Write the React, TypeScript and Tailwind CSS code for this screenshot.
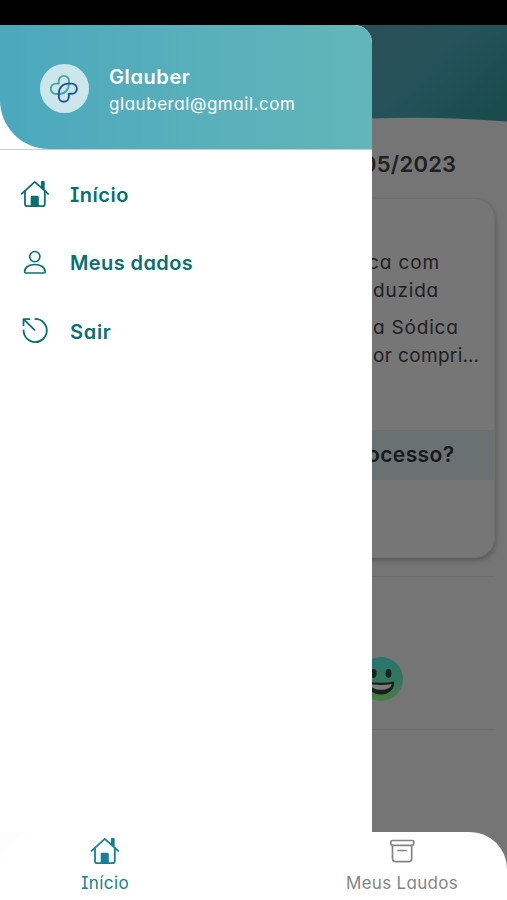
import { ReactNode } from "react";

interface IconProps {
  className?: string;
}

function HouseIcon({ className }: IconProps) {
  return (
    <svg viewBox="0 0 30 28" className={className} fill="none" stroke="currentColor" strokeWidth="1.8" strokeLinecap="round" strokeLinejoin="round">
      <path d="M1.6 13.8 L14.8 1.8 L28.2 13.8" />
      <path d="M5 11.5 V24 Q5 26.2 7.2 26.2 H22.6 Q24.8 26.2 24.8 24 V11.5" />
      <path d="M21.8 2 H23.8 V9 L21.8 7.2 Z" fill="currentColor" />
      <path d="M11.6 26 V17.2 Q11.6 16.7 12.1 16.7 H17.4 Q17.9 16.7 17.9 17.2 V26 Z" fill="currentColor" />
    </svg>
  );
}

function PersonIcon({ className }: IconProps) {
  return (
    <svg viewBox="0 0 24 26" className={className} fill="none" stroke="currentColor" strokeWidth="1.6" strokeLinejoin="round">
      <circle cx="11.8" cy="6.6" r="5.1" />
      <path d="M1.6 21.8 C1.6 17.4 6 14.5 11.8 14.5 C17.6 14.5 22.2 17.4 22.2 21.8 Q22.2 23 21.1 23 H2.7 Q1.6 23 1.6 21.8 Z" />
    </svg>
  );
}

function ExitIcon({ className }: IconProps) {
  return (
    <svg viewBox="0 0 28 28" className={className} fill="none" stroke="currentColor" strokeWidth="1.8" strokeLinecap="round" strokeLinejoin="round">
      <path d="M14.3 1.9 A11.6 11.6 0 1 1 2.6 13.5" />
      <path d="M13.5 12.8 L2.6 2.2 M2.5 8 V2.1 H8.5" />
    </svg>
  );
}

function ArchiveIcon({ className }: IconProps) {
  return (
    <svg viewBox="0 0 26 26" className={className} fill="none" stroke="currentColor" strokeWidth="1.7" strokeLinecap="round" strokeLinejoin="round">
      <rect x="1.8" y="2.5" width="23" height="4.8" rx="1.5" />
      <path d="M3.5 7.3 V20.5 Q3.5 23.6 6.5 23.6 H19.7 Q22.7 23.6 22.7 20.5 V7.3 M9 12.5 H17" />
    </svg>
  );
}

function Logo({ className }: IconProps) {
  return (
    <svg viewBox="0 0 29 29" className={className} fill="none" strokeWidth="1.9" strokeLinecap="round" strokeLinejoin="round">
      <path
        stroke="#43aa9b"
        d="M8.8 9.6 V7 A5.1 5.1 0 0 1 19 7 V9.6 C19 15.5 15.2 20 9.2 20 H6 A5.2 5.2 0 0 1 6 9.6 Z"
      />
      <path
        stroke="#24529a"
        d="M18.8 19.8 V22.8 A5 5 0 0 1 8.8 22.8 V19.6 C8.8 13.6 12.8 9.6 18.4 9.6 H21.8 A5.1 5.1 0 0 1 21.8 19.8 Z"
      />
    </svg>
  );
}

function Smiley({ className }: IconProps) {
  return (
    <svg viewBox="0 0 44 44" className={className}>
      <defs>
        <linearGradient id="face" x1="0" y1="0" x2="0" y2="1">
          <stop offset="0" stopColor="#27756f" />
          <stop offset="0.55" stopColor="#35765b" />
          <stop offset="1" stopColor="#477c43" />
        </linearGradient>
      </defs>
      <circle cx="22" cy="22" r="22" fill="url(#face)" />
      <ellipse cx="14.5" cy="16.5" rx="3" ry="4.4" fill="#17211e" />
      <ellipse cx="29.5" cy="16.5" rx="3" ry="4.4" fill="#17211e" />
      <path d="M8.8 24.5 Q22 27 35.2 24.5 C35.8 31 31 37.5 22 37.5 C13 37.5 8.2 31 8.8 24.5 Z" fill="#17211e" />
      <path d="M11.2 27 Q22 29.2 32.8 27 Q31.5 32.8 22 32.8 Q12.5 32.8 11.2 27 Z" fill="#7b7d7b" />
    </svg>
  );
}

function MenuItem({ icon, children }: { icon: ReactNode; children: ReactNode }) {
  return (
    <button className="flex h-[68.5px] w-full items-center pl-5 text-left text-[#08706f]">
      <span className="flex w-[30px] justify-center">{icon}</span>
      <span className="ml-5 pt-px text-[20px] font-semibold">{children}</span>
    </button>
  );
}

function Drawer() {
  return (
    <aside className="absolute top-[25px] left-0 h-[807px] w-[372px] overflow-hidden rounded-tr-[18px] bg-white">
      <div className="border-b border-[#c9cdce]">
        <header className="flex h-[124px] items-center rounded-bl-[49px] bg-linear-to-r from-[#4ba8bd] to-[#62b6b8] pt-[3px] pl-10 text-white">
          <div className="flex size-[49px] items-center justify-center rounded-full bg-[#cce7ec]">
            <Logo className="size-[29px]" />
          </div>
          <div className="ml-5 pt-[3px] whitespace-nowrap">
            <div className="text-[20px] leading-[27px] font-semibold tracking-[0.6px]">Glauber</div>
            <div className="text-[17px] leading-[26px] tracking-[0.55px]">glauberal@gmail.com</div>
          </div>
        </header>
      </div>
      <nav className="pt-[10px]">
        <MenuItem icon={<HouseIcon className="h-7 w-[30px]" />}>
          <span className="tracking-[0.5px]">Início</span>
        </MenuItem>
        <MenuItem icon={<PersonIcon className="h-[26px] w-6" />}>
          <span className="tracking-[0.4px]">Meus dados</span>
        </MenuItem>
        <MenuItem icon={<ExitIcon className="size-7" />}>
          <span className="tracking-[0.7px]">Sair</span>
        </MenuItem>
      </nav>
    </aside>
  );
}

export default function App() {
  return (
    <div className="relative flex h-[900px] w-full flex-col overflow-hidden bg-[#757575] font-['Inter','Noto_Sans',sans-serif] [font-feature-settings:'cv11','cv08']">
      <div className="h-[25px] shrink-0 bg-black" />

      {/* Dimmed page under the drawer */}
      <main className="h-[807px] shrink-0 whitespace-nowrap text-[#202122]">
        <svg viewBox="0 0 507 98" className="block h-[98px] w-full">
          <defs>
            <linearGradient id="banner" gradientUnits="userSpaceOnUse" x1="395" y1="0" x2="480" y2="95">
              <stop offset="0" stopColor="#295057" />
              <stop offset="0.45" stopColor="#25525a" />
              <stop offset="1" stopColor="#1a4c4e" />
            </linearGradient>
          </defs>
          <path d="M0 0 H507 V96.5 Q440 91 372 93.5 L0 98 Z" fill="url(#banner)" />
        </svg>
        <h1 className="mt-[26px] ml-[362px] text-[22px] leading-[30px] font-semibold tracking-[0.25px]">05/2023</h1>
        <section className="mt-[19px] mr-3 ml-3 h-[360px] overflow-hidden rounded-[20px] border border-[#6f6f6f] bg-[#767676] pt-[50px] shadow-[1px_3px_5px_#00000038]">
          <div className="ml-[355px] text-[19px] leading-7">
            <p className="tracking-[0.9px]">ca com</p>
            <p className="ml-[5px] tracking-[0.8px]">duzida</p>
            <p className="mt-[9px] ml-[5px] tracking-[0.8px]">a Sódica</p>
            <p className="ml-[5px] tracking-[0.35px]">or compri…</p>
          </div>
          <div className="mt-[60px] h-[50px] bg-[#6a7173] pl-[354px] text-[21px] leading-[49px] font-semibold tracking-[0.4px] text-[#15191b]">
            ocesso?
          </div>
        </section>
        <div className="mx-3 mt-[18px] flex h-[154px] items-center border-y border-[#6d6d6d] pt-[52px] pl-[347px]">
          <Smiley className="size-11" />
        </div>
      </main>

      <footer className="h-[68px] bg-linear-to-r from-[#fdfdfd] from-50% to-[#757575] to-50%">
        <div className="flex h-full rounded-tl-[37px] rounded-tr-[37px] bg-white whitespace-nowrap">
          <a className="flex w-[210px] flex-col items-center pt-[5px] text-[#168094]">
            <HouseIcon className="h-7 w-[30px]" />
            <span className="mt-1.5 text-[17px] leading-6 tracking-[0.4px]">Início</span>
          </a>
          <a className="ml-[87px] flex w-[210px] flex-col items-center pt-[6px] text-[#858585]">
            <ArchiveIcon className="size-[26px]" />
            <span className="mt-[7px] text-[17px] leading-6 tracking-[0.3px]">Meus Laudos</span>
          </a>
        </div>
      </footer>

      <Drawer />
    </div>
  );
}
